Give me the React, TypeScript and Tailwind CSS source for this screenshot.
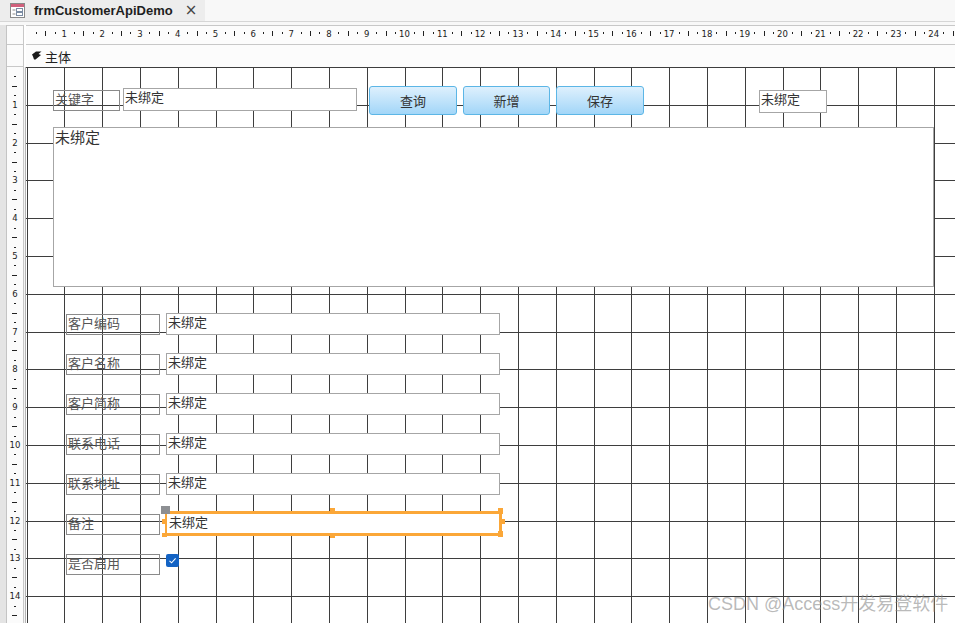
import React from "react";

const CM = 37.8;
const CANVAS_W = 929;
const CANVAS_H = 556;

const FONT = "font-['Noto_Sans_CJK_SC','Noto_Sans',sans-serif]";

type Box = { x: number; y: number; w: number; h: number; text: string };

// Controls placed on the design canvas (coordinates relative to the detail section)
const labels: Box[] = [
  { x: 27, y: 23, w: 67, h: 21, text: "关键字" },
  ...["客户编码", "客户名称", "客户简称", "联系电话", "联系地址", "备注", "是否启用"].map(
    (t, i) => ({ x: 40, y: 247 + i * 40, w: 94, h: 21, text: t })
  ),
];

const textBoxes: Box[] = [
  { x: 97, y: 21, w: 234, h: 23, text: "未绑定" },
  { x: 733, y: 23, w: 68, h: 23, text: "未绑定" },
  ...[0, 1, 2, 3, 4].map((i) => ({ x: 140, y: 246 + i * 40, w: 334, h: 22, text: "未绑定" })),
];

const buttons: Box[] = [
  { x: 343, y: 19, w: 88, h: 29, text: "查询" },
  { x: 437, y: 19, w: 87, h: 29, text: "新增" },
  { x: 530, y: 19, w: 88, h: 29, text: "保存" },
];

function FormIcon() {
  return (
    <svg width="15" height="15" viewBox="0 0 15 15" className="shrink-0">
      <rect x="0.5" y="0.5" width="14" height="14" fill="#fff" stroke="#8a8a8a" />
      <rect x="1" y="1" width="13" height="3" fill="#d0607c" />
      <rect x="2.5" y="6.5" width="3" height="1" fill="#8a8a8a" />
      <rect x="2.5" y="10.5" width="3" height="1" fill="#8a8a8a" />
      <rect x="6.5" y="5.5" width="6" height="3" fill="none" stroke="#7b8ca3" />
      <rect x="6.5" y="9.5" width="6" height="3" fill="none" stroke="#7b8ca3" />
    </svg>
  );
}

function TopRuler() {
  const marks: React.ReactNode[] = [];
  for (let k = 0; k < 25; k++) {
    const base = 0.5 + CM * k;
    const q1 = Math.round(base + CM * 0.25);
    const half = Math.round(base + CM * 0.5);
    const q3 = Math.round(base + CM * 0.75);
    marks.push(<rect key={`a${k}`} x={q1} y={6} width={1} height={2} fill="#222" />);
    marks.push(<rect key={`b${k}`} x={half} y={5} width={1} height={5} fill="#222" />);
    marks.push(<rect key={`c${k}`} x={q3} y={6} width={1} height={2} fill="#222" />);
    if (k < 24) {
      marks.push(
        <text
          key={`n${k}`}
          x={base + CM}
          y={10.5}
          textAnchor="middle"
          fontSize="8.5"
          fontFamily="'DejaVu Sans', sans-serif"
          fill="#1a1a1a"
        >
          {k + 1}
        </text>
      );
    }
  }
  return (
    <svg width={CANVAS_W} height={18} shapeRendering="crispEdges" className="block">
      {marks}
    </svg>
  );
}

function LeftRuler() {
  const marks: React.ReactNode[] = [];
  for (let k = 0; k < 15; k++) {
    const base = CM * k;
    const q1 = Math.round(base + CM * 0.25);
    const half = Math.round(base + CM * 0.5);
    const q3 = Math.round(base + CM * 0.75);
    marks.push(<rect key={`a${k}`} x={7} y={q1} width={2} height={1} fill="#222" />);
    marks.push(<rect key={`b${k}`} x={5} y={half} width={5} height={1} fill="#222" />);
    marks.push(<rect key={`c${k}`} x={7} y={q3} width={2} height={1} fill="#222" />);
    if (k > 0) {
      marks.push(
        <text
          key={`n${k}`}
          x={8}
          y={base + 3}
          textAnchor="middle"
          fontSize="8.5"
          fontFamily="'DejaVu Sans', sans-serif"
          fill="#1a1a1a"
        >
          {k}
        </text>
      );
    }
  }
  return (
    <svg width={16} height={CANVAS_H} shapeRendering="crispEdges" className="block">
      {marks}
    </svg>
  );
}

function GridLines() {
  const lines: React.ReactNode[] = [];
  for (let k = 0; 0.5 + CM * k < CANVAS_W; k++) {
    const x = Math.round(0.5 + CM * k) + 0.5;
    lines.push(<line key={`v${k}`} x1={x} y1={0} x2={x} y2={CANVAS_H} stroke="#3e3e3e" strokeWidth={1} />);
  }
  for (let k = 0; CM * k < CANVAS_H; k++) {
    const y = Math.round(CM * k) + 0.5;
    lines.push(<line key={`h${k}`} x1={0} y1={y} x2={CANVAS_W} y2={y} stroke="#3e3e3e" strokeWidth={1} />);
  }
  return (
    <svg width={CANVAS_W} height={CANVAS_H} shapeRendering="crispEdges" className="absolute left-0 top-0">
      {lines}
    </svg>
  );
}

function SelectedTextBox() {
  return (
    <>
      <div className="absolute left-[139px] top-[444px] w-[337px] h-[25px] border-[3px] border-l-[2px] border-[#fba738] bg-white pl-[2px] text-[13px] leading-[15px] text-[#333] whitespace-nowrap">
        未绑定
      </div>
      {/* move handle */}
      <div className="absolute left-[135px] top-[439px] w-[9px] h-[8px] bg-[#8d8f93]" />
      {/* sizing handles */}
      <div className="absolute left-[136px] top-[452px] w-[4px] h-[5px] bg-[#fba738]" />
      <div className="absolute left-[136px] top-[466px] w-[5px] h-[4px] bg-[#fba738]" />
      <div className="absolute left-[304px] top-[441px] w-[5px] h-[4px] bg-[#fba738]" />
      <div className="absolute left-[304px] top-[467px] w-[5px] h-[4px] bg-[#fba738]" />
      <div className="absolute left-[472px] top-[441px] w-[5px] h-[6px] bg-[#fba738]" />
      <div className="absolute left-[476px] top-[452px] w-[3px] h-[5px] bg-[#fba738]" />
      <div className="absolute left-[472px] top-[464px] w-[5px] h-[6px] bg-[#fba738]" />
    </>
  );
}

function Checkbox() {
  return (
    <div className="absolute left-[140px] top-[487px] w-[13px] h-[13px] rounded-[2px] bg-[#1363c4] flex items-center justify-center">
      <svg width="9" height="9" viewBox="0 0 9 9">
        <path d="M1.5 4.8 L3.6 6.8 L7.6 2.4" fill="none" stroke="#fff" strokeWidth="1.1" />
      </svg>
    </div>
  );
}

export default function App() {
  return (
    <div className={`relative w-[955px] h-[623px] overflow-hidden bg-white flex flex-col ${FONT}`}>
      {/* document tab strip */}
      <div className="flex h-[22px] shrink-0 bg-[#f8f8f8] border-b border-[#d6d6d6]">
        <div className="flex items-center w-[205px] bg-[#ededed] pl-[10px]">
          <FormIcon />
          <span className="ml-[9px] text-[13px] font-bold text-[#1e1e1e] font-['Liberation_Sans',sans-serif] leading-none">
            frmCustomerApiDemo
          </span>
          <span className="ml-[12px] text-[#444] text-[15px] leading-none font-['DejaVu_Sans',sans-serif]">×</span>
        </div>
      </div>
      <div className="h-[3px] shrink-0 bg-[#f8f8f8]" />

      <div className="flex flex-1">
        {/* window edge */}
        <div className="w-[7px] bg-[#e4e4e4] border-r border-[#c4c4c4]" />
        {/* left ruler column */}
        <div className="flex flex-col w-[19px]">
          <div className="h-[20px] border-y border-r border-[#c8c8c8] bg-[#fbfbfb] w-[17px]" />
          <div className="h-[22px] border-b border-r border-[#c8c8c8] bg-[#fbfbfb] w-[17px]" />
          <div className="flex-1 flex">
            <div className="w-[17px] border-r border-[#c8c8c8] bg-[#fbfbfb]">
              <LeftRuler />
            </div>
            <div className="w-[2px] border-r border-[#b4b4b4] bg-[#f4f4f4]" />
          </div>
        </div>
        {/* main column */}
        <div className="flex flex-col flex-1">
          <div className="h-[20px] border-y border-[#c8c8c8] bg-[#fcfcfc]">
            <TopRuler />
          </div>
          <div className="h-[22px] bg-[#fcfcfc] flex items-center pl-[6px]">
            <svg width="10" height="9" viewBox="0 0 10 9" className="mt-[-2px]">
              <path d="M0 3.5 L4 0.5 L9.5 0.5 L6.5 3 L9 4 L3.5 8.5 L2 8.5 L1 5.5 Z" fill="#1a1a1a" />
            </svg>
            <span className="ml-[3px] text-[13px] text-[#222] leading-none">主体</span>
          </div>
          {/* detail section canvas */}
          <div className="relative flex-1">
            <GridLines />
            {labels.map((b) => (
              <div
                key={b.text}
                className="absolute border border-[#8a8a8a] text-[13px] leading-[15px] text-[#555] pl-[1px] whitespace-nowrap overflow-hidden"
                style={{ left: b.x, top: b.y, width: b.w, height: b.h }}
              >
                {b.text}
              </div>
            ))}
            {textBoxes.map((b, i) => (
              <div
                key={i}
                className="absolute border border-[#a6a6a6] bg-white text-[13px] leading-[15px] text-[#333] pl-[1px] whitespace-nowrap overflow-hidden"
                style={{ left: b.x, top: b.y, width: b.w, height: b.h }}
              >
                {b.text}
              </div>
            ))}
            <div className="absolute left-[27px] top-[60px] w-[881px] h-[160px] border border-[#a6a6a6] bg-white pl-[1px] text-[15px] leading-[18px] text-[#333]">
              未绑定
            </div>
            {buttons.map((b) => (
              <div
                key={b.text}
                className="absolute rounded-[3px] border border-[#5cb6e6] bg-gradient-to-b from-[#def0fd] to-[#a2d6f8] flex items-center justify-center text-[13px] text-[#333]"
                style={{ left: b.x, top: b.y, width: b.w, height: b.h }}
              >
                {b.text}
              </div>
            ))}
            <SelectedTextBox />
            <Checkbox />
          </div>
        </div>
      </div>

      <div className="absolute left-[708px] top-[593px] text-[18px] leading-[22px] text-[rgba(140,140,140,0.6)] whitespace-nowrap font-['Liberation_Sans','Noto_Sans_CJK_SC',sans-serif]">
        CSDN @Access开发易登软件
      </div>
    </div>
  );
}
